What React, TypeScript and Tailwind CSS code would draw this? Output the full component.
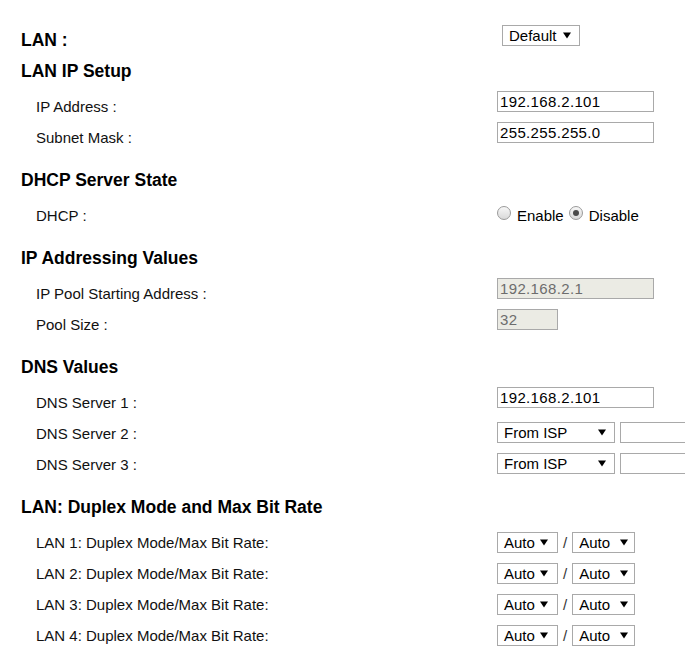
import React from "react";

function Tri() {
  return (
    <svg width="8" height="7" viewBox="0 0 8 7" className="shrink-0">
      <polygon points="0,0.5 8,0.5 4,6.5" fill="#000" />
    </svg>
  );
}

function Sel({ text, w, pr, cls = "" }: { text: string; w: string; pr: string; cls?: string }) {
  return (
    <div
      className={`flex h-[21px] items-center justify-between border border-[#a9a9a9] bg-white pl-[6px] text-[15px] leading-[19px] text-black ${w} ${pr} ${cls}`}
    >
      <span>{text}</span>
      <Tri />
    </div>
  );
}

function TextBox({ value = "", w = "w-[157px]", disabled = false, cls = "" }: { value?: string; w?: string; disabled?: boolean; cls?: string }) {
  return (
    <div
      className={`h-[21px] border border-[#a9a9a9] pl-[2px] text-[15px] leading-[19px] tracking-[0.35px] ${
        disabled ? "bg-[#ebebe4] text-[#6d6d6d]" : "bg-white text-black"
      } ${w} ${cls}`}
    >
      {value}
    </div>
  );
}

function Radio({ checked }: { checked?: boolean }) {
  return (
    <div className="mt-[1px] flex h-[14px] w-[14px] shrink-0 items-center justify-center rounded-full border border-[#9a9a9a] bg-gradient-to-b from-[#f7f7f7] to-[#d9d9d9]">
      {checked && <div className="h-[6px] w-[6px] rounded-full bg-[#4a4a4a]" />}
    </div>
  );
}

function Row({ label, children }: { label: string; children: React.ReactNode }) {
  return (
    <div className="flex h-[31px] items-start">
      <div className="w-[476px] shrink-0 pl-[15px] pt-[5px] text-[15px] leading-[21px] text-[#111]">{label}</div>
      <div className="flex items-start">{children}</div>
    </div>
  );
}

function Heading({ children }: { children: React.ReactNode }) {
  return <div className="text-[17.5px] font-bold leading-[22px] text-black">{children}</div>;
}

function Section({ title, children }: { title: string; children: React.ReactNode }) {
  return (
    <div className="mt-[16px]">
      <Heading>{title}</Heading>
      <div className="mt-[9px]">{children}</div>
    </div>
  );
}

export default function App() {
  const lanRows = [1, 2, 3, 4];
  return (
    <div className="h-[661px] w-[685px] overflow-hidden bg-white pl-[21px] pt-[25px] font-['Liberation_Sans',Arial,sans-serif] text-black">
      <div className="flex items-start">
        <div className="mt-[4px] w-[481px] shrink-0">
          <Heading>LAN :</Heading>
        </div>
        <Sel text="Default" w="w-[78px]" pr="pr-[8px]" />
      </div>

      <div className="mt-[9px]">
        <Heading>LAN IP Setup</Heading>
        <div className="mt-[9px]">
          <Row label="IP Address :">
            <TextBox value="192.168.2.101" />
          </Row>
          <Row label="Subnet Mask :">
            <TextBox value="255.255.255.0" />
          </Row>
        </div>
      </div>

      <Section title="DHCP Server State">
        <Row label="DHCP :">
          <div className="flex items-start pt-[5px] text-[15px] leading-[21px]">
            <Radio />
            <span className="ml-[6px] mr-[5px]">Enable</span>
            <Radio checked />
            <span className="ml-[6px]">Disable</span>
          </div>
        </Row>
      </Section>

      <Section title="IP Addressing Values">
        <Row label="IP Pool Starting Address :">
          <TextBox value="192.168.2.1" disabled />
        </Row>
        <Row label="Pool Size :">
          <TextBox value="32" disabled w="w-[61px]" />
        </Row>
      </Section>

      <Section title="DNS Values">
        <Row label="DNS Server 1 :">
          <TextBox value="192.168.2.101" />
        </Row>
        <Row label="DNS Server 2 :">
          <Sel text="From ISP" w="w-[118px]" pr="pr-[8px]" cls="mt-[4px] shrink-0" />
          <TextBox w="w-[157px]" cls="ml-[5px] mt-[4px] shrink-0" />
        </Row>
        <Row label="DNS Server 3 :">
          <Sel text="From ISP" w="w-[118px]" pr="pr-[8px]" cls="mt-[4px] shrink-0" />
          <TextBox w="w-[157px]" cls="ml-[5px] mt-[4px] shrink-0" />
        </Row>
      </Section>

      <Section title="LAN: Duplex Mode and Max Bit Rate">
        {lanRows.map((n) => (
          <Row key={n} label={`LAN ${n}: Duplex Mode/Max Bit Rate:`}>
            <div className="mt-[5px] flex items-center">
              <Sel text="Auto" w="w-[61px]" pr="pr-[9px]" cls="shrink-0" />
              <span className="mx-[5px] text-[15px] leading-[21px] text-[#333]">/</span>
              <Sel text="Auto" w="w-[63px]" pr="pr-[6px]" cls="shrink-0" />
            </div>
          </Row>
        ))}
      </Section>
    </div>
  );
}
